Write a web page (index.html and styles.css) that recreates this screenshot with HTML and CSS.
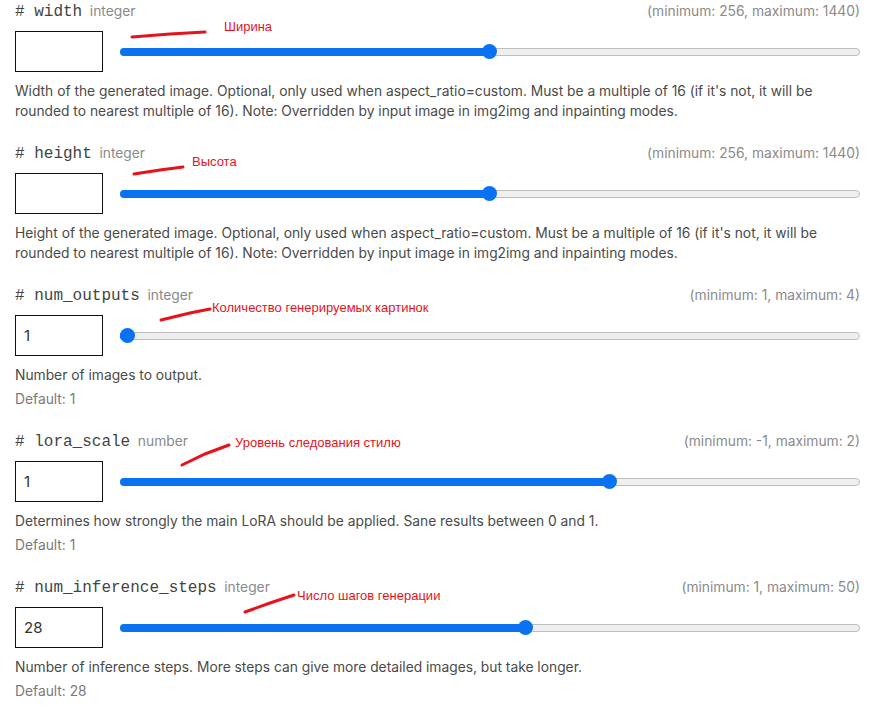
FILE: index.html
```html
<!DOCTYPE html>
<html lang="en">
<head>
    <meta charset="UTF-8">
    <meta name="viewport" content="width=device-width, initial-scale=1.0">
    <title>Inputs</title>
    <link rel="stylesheet" href="styles.css">
</head>
<body>
<div class="page">

    <!-- width -->
    <div class="field">
        <div class="field-head">
            <div class="field-name"># width <span class="field-type">integer</span></div>
            <div class="field-range">(minimum: 256, maximum: 1440)</div>
        </div>
        <div class="field-control">
            <div class="num-box"></div>
            <div class="slider">
                <div class="slider-fill" style="width: calc(7px + 0.5 * (100% - 14px))"></div>
                <div class="slider-thumb" style="left: calc(7px + 0.5 * (100% - 14px))"></div>
            </div>
        </div>
        <p class="field-desc">Width of the generated image. Optional, only used when aspect_ratio=custom. Must be a multiple of 16 (if it's not, it will be rounded to nearest multiple of 16). Note: Overridden by input image in img2img and inpainting modes.</p>
    </div>

    <!-- height -->
    <div class="field">
        <div class="field-head">
            <div class="field-name"># height <span class="field-type">integer</span></div>
            <div class="field-range">(minimum: 256, maximum: 1440)</div>
        </div>
        <div class="field-control">
            <div class="num-box"></div>
            <div class="slider">
                <div class="slider-fill" style="width: calc(7px + 0.5 * (100% - 14px))"></div>
                <div class="slider-thumb" style="left: calc(7px + 0.5 * (100% - 14px))"></div>
            </div>
        </div>
        <p class="field-desc">Height of the generated image. Optional, only used when aspect_ratio=custom. Must be a multiple of 16 (if it's not, it will be rounded to nearest multiple of 16). Note: Overridden by input image in img2img and inpainting modes.</p>
    </div>

    <!-- num_outputs -->
    <div class="field">
        <div class="field-head">
            <div class="field-name"># num_outputs <span class="field-type">integer</span></div>
            <div class="field-range">(minimum: 1, maximum: 4)</div>
        </div>
        <div class="field-control">
            <div class="num-box">1</div>
            <div class="slider">
                <div class="slider-fill" style="width: 7px"></div>
                <div class="slider-thumb" style="left: 7px"></div>
            </div>
        </div>
        <p class="field-desc">Number of images to output.</p>
        <p class="field-default">Default: 1</p>
    </div>

    <!-- lora_scale -->
    <div class="field">
        <div class="field-head">
            <div class="field-name"># lora_scale <span class="field-type">number</span></div>
            <div class="field-range">(minimum: -1, maximum: 2)</div>
        </div>
        <div class="field-control">
            <div class="num-box">1</div>
            <div class="slider">
                <div class="slider-fill" style="width: calc(7px + 0.667 * (100% - 14px))"></div>
                <div class="slider-thumb" style="left: calc(7px + 0.667 * (100% - 14px))"></div>
            </div>
        </div>
        <p class="field-desc">Determines how strongly the main LoRA should be applied. Sane results between 0 and 1.</p>
        <p class="field-default">Default: 1</p>
    </div>

    <!-- num_inference_steps -->
    <div class="field">
        <div class="field-head">
            <div class="field-name"># num_inference_steps <span class="field-type">integer</span></div>
            <div class="field-range">(minimum: 1, maximum: 50)</div>
        </div>
        <div class="field-control">
            <div class="num-box">28</div>
            <div class="slider">
                <div class="slider-fill" style="width: calc(7px + 0.551 * (100% - 14px))"></div>
                <div class="slider-thumb" style="left: calc(7px + 0.551 * (100% - 14px))"></div>
            </div>
        </div>
        <p class="field-desc">Number of inference steps. More steps can give more detailed images, but take longer.</p>
        <p class="field-default">Default: 28</p>
    </div>

    <!-- red notes drawn over the screenshot -->
    <svg class="notes" width="882" height="713" viewBox="0 0 882 713">
        <g stroke="#e5141b" stroke-width="3" stroke-linecap="round" fill="none">
            <path d="M132 37 L170 34 L205 32"/>
            <path d="M134 174 L160 170 L183 167"/>
            <path d="M161 320 L190 313 L210 309"/>
            <path d="M182 465 L205 454 L229 445"/>
            <path d="M245 612 L270 603 L294 595"/>
        </g>
    </svg>
    <span class="note" style="left: 224px; top: 19px">Ширина</span>
    <span class="note" style="left: 192px; top: 154px">Высота</span>
    <span class="note" style="left: 212px; top: 300px">Количество генерируемых картинок</span>
    <span class="note" style="left: 235px; top: 435px">Уровень следования стилю</span>
    <span class="note" style="left: 297px; top: 588px">Число шагов генерации</span>
</div>
</body>
</html>
```

FILE: styles.css
```css
body {
    margin: 0;
    background-color: #fff;
    font-family: Inter, "Noto Sans", sans-serif;
    color: #4a4a4a;
}
.page {
    position: relative;
    width: 882px;
    height: 713px;
    padding: 0 22px 0 15px;
    box-sizing: border-box;
    overflow: hidden;
}
.field {
    margin-bottom: 21px;
}
.field-head {
    display: flex;
    justify-content: space-between;
    align-items: baseline;
    height: 22px;
    line-height: 22px;
}
.field-name {
    font-family: "Liberation Mono", "DejaVu Sans Mono", monospace;
    font-size: 16px;
    color: #444;
}
.field-type {
    margin-left: -2px;
    font-family: Inter, "Noto Sans", sans-serif;
    font-size: 13.8px;
    color: #8a8a8a;
}
.field-range {
    font-size: 13.8px;
    color: #8a8a8a;
}
.field-control {
    display: flex;
    align-items: center;
    gap: 17px;
    margin-top: 9px;
}
.num-box {
    width: 88px;
    height: 41px;
    box-sizing: border-box;
    border: 1px solid #111;
    padding-left: 8px;
    line-height: 39px;
    font-size: 15px;
    color: #333;
}
.slider {
    position: relative;
    flex: 1;
    height: 8px;
    box-sizing: border-box;
    border: 1px solid #bdbdbd;
    border-radius: 4px;
    background-color: #efefef;
}
.slider-fill {
    position: absolute;
    left: -1px;
    top: -1px;
    bottom: -1px;
    border-radius: 4px;
    background-color: #0a72f0;
}
.slider-thumb {
    position: absolute;
    top: 50%;
    width: 15px;
    height: 15px;
    margin: -7.5px 0 0 -8.5px;
    border-radius: 50%;
    background-color: #0a72f0;
}
.field-desc {
    margin: 9px 0 0;
    font-size: 13.8px;
    line-height: 20px;
}
.field-default {
    margin: 4px 0 0;
    font-size: 13.8px;
    line-height: 20px;
    color: #7a7a7a;
}
.notes {
    position: absolute;
    left: 0;
    top: 0;
}
.note {
    position: absolute;
    font-family: "Liberation Sans", Arial, sans-serif;
    font-size: 13px;
    line-height: 16px;
    color: #e5141b;
    white-space: nowrap;
}
```
